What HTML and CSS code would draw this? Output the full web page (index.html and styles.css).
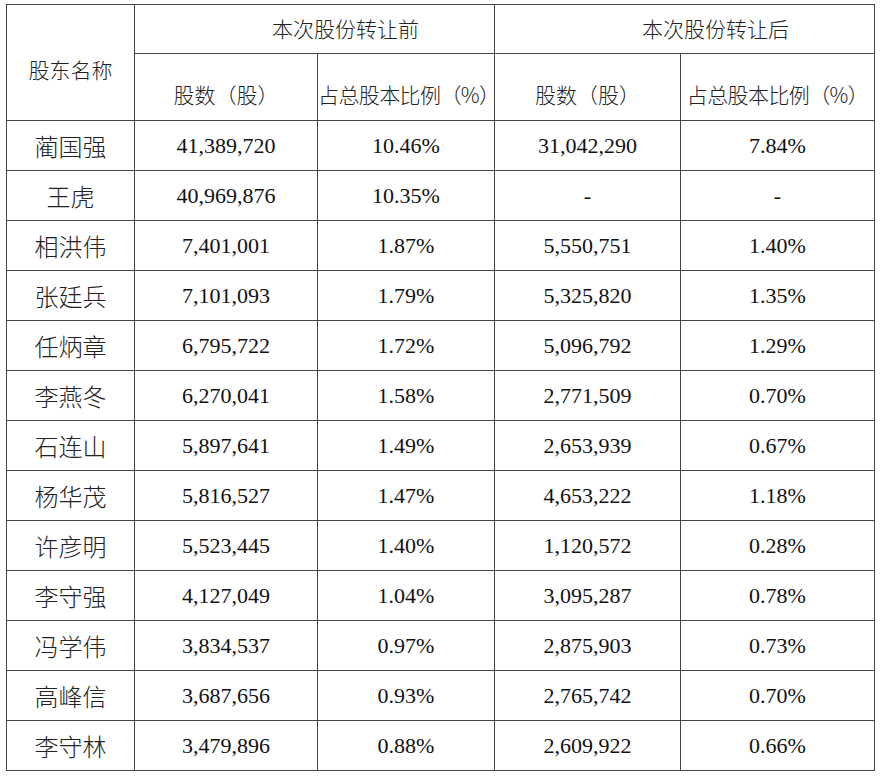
FILE: index.html
```html
<!DOCTYPE html>
<html lang="zh-CN">
<head>
<meta charset="utf-8">
<title>股份转让</title>
<link rel="stylesheet" href="styles.css">
</head>
<body>
<table class="sheet">
  <colgroup>
    <col class="c-name">
    <col class="c-n1">
    <col class="c-p1">
    <col class="c-n2">
    <col class="c-p2">
  </colgroup>
  <thead>
    <tr class="h1">
      <th rowspan="2" class="hname"><span>股东名称</span></th>
      <th colspan="2" class="hgroup">本次股份转让前</th>
      <th colspan="2" class="hgroup">本次股份转让后</th>
    </tr>
    <tr class="h2">
      <th class="hsub">股数（股）</th>
      <th class="hsub tight">占总股本比例（%）</th>
      <th class="hsub">股数（股）</th>
      <th class="hsub tight">占总股本比例（%）</th>
    </tr>
  </thead>
  <tbody>
    <tr><td class="name">蔺国强</td><td>41,389,720</td><td>10.46%</td><td>31,042,290</td><td>7.84%</td></tr>
    <tr><td class="name">王虎</td><td>40,969,876</td><td>10.35%</td><td>-</td><td>-</td></tr>
    <tr><td class="name">相洪伟</td><td>7,401,001</td><td>1.87%</td><td>5,550,751</td><td>1.40%</td></tr>
    <tr><td class="name">张廷兵</td><td>7,101,093</td><td>1.79%</td><td>5,325,820</td><td>1.35%</td></tr>
    <tr><td class="name">任炳章</td><td>6,795,722</td><td>1.72%</td><td>5,096,792</td><td>1.29%</td></tr>
    <tr><td class="name">李燕冬</td><td>6,270,041</td><td>1.58%</td><td>2,771,509</td><td>0.70%</td></tr>
    <tr><td class="name">石连山</td><td>5,897,641</td><td>1.49%</td><td>2,653,939</td><td>0.67%</td></tr>
    <tr><td class="name">杨华茂</td><td>5,816,527</td><td>1.47%</td><td>4,653,222</td><td>1.18%</td></tr>
    <tr><td class="name">许彦明</td><td>5,523,445</td><td>1.40%</td><td>1,120,572</td><td>0.28%</td></tr>
    <tr><td class="name">李守强</td><td>4,127,049</td><td>1.04%</td><td>3,095,287</td><td>0.78%</td></tr>
    <tr><td class="name">冯学伟</td><td>3,834,537</td><td>0.97%</td><td>2,875,903</td><td>0.73%</td></tr>
    <tr><td class="name">高峰信</td><td>3,687,656</td><td>0.93%</td><td>2,765,742</td><td>0.70%</td></tr>
    <tr><td class="name">李守林</td><td>3,479,896</td><td>0.88%</td><td>2,609,922</td><td>0.66%</td></tr>
  </tbody>
</table>
</body>
</html>
```

FILE: styles.css
```css
html, body {
  margin: 0;
  padding: 0;
  background: #ffffff;
}

body {
  padding: 4px 0 0 6px;
  color: #111111;
  font-family: "Liberation Serif", "Noto Sans CJK SC", serif;
}

.sheet {
  border-collapse: collapse;
  table-layout: fixed;
  width: 868px;
}

.c-name { width: 128px; }
.c-n1 { width: 183px; }
.c-p1 { width: 177px; }
.c-n2 { width: 186px; }
.c-p2 { width: 194px; }

.sheet th,
.sheet td {
  border: 1px solid #444444;
  padding: 0;
  text-align: center;
  vertical-align: middle;
  font-weight: normal;
  white-space: nowrap;
  overflow: visible;
  line-height: 24px;
}

.sheet th {
  font-family: "Noto Sans CJK SC", sans-serif;
  font-size: 21px;
  font-weight: 300;
  color: #222222;
}

.h1 th {
  height: 46px;
}

.h1 th.hgroup {
  padding-left: 62px;
  padding-bottom: 2px;
}

.h2 th {
  height: 52px;
  padding-top: 14px;
}

.h1 th.hname {
  height: auto;
  padding-top: 12px;
}

.hsub.tight {
  letter-spacing: -0.6px;
}

.sheet td {
  height: 49px;
  font-size: 22px;
  color: #111111;
}

.sheet td.name {
  font-family: "Noto Sans CJK SC", sans-serif;
  font-size: 24px;
  font-weight: 300;
  color: #222222;
}
```
